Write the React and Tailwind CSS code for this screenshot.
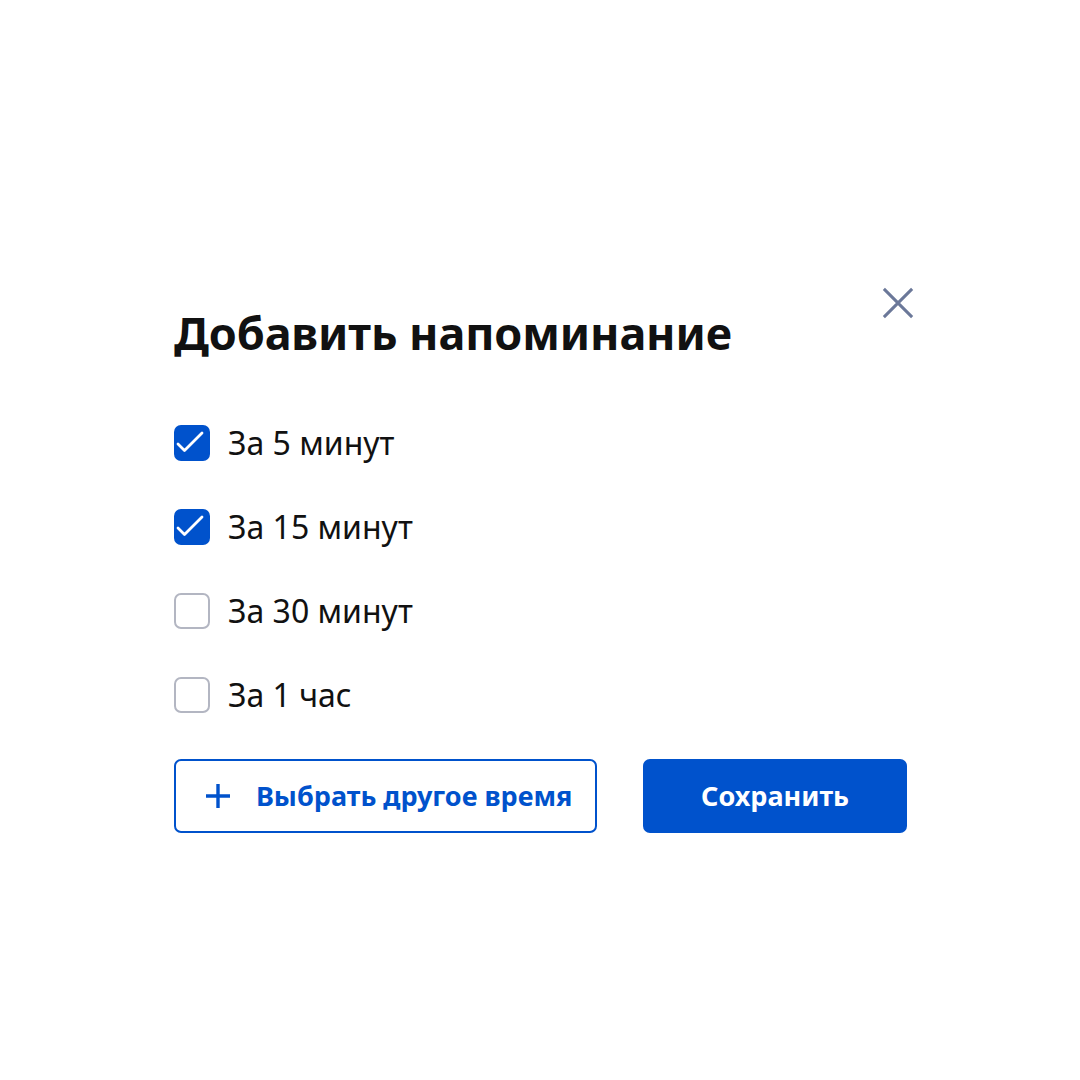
import React, { useState } from 'react';

const options = [
  { id: 5, label: 'За 5 минут', checked: true },
  { id: 15, label: 'За 15 минут', checked: true },
  { id: 30, label: 'За 30 минут', checked: false },
  { id: 60, label: 'За 1 час', checked: false },
];

function Checkbox({ checked }) {
  if (checked) {
    return (
      <span className="w-9 h-9 rounded-[7px] bg-[#0052cc] flex items-center justify-center shrink-0">
        <svg width="36" height="36" viewBox="0 0 36 36" fill="none">
          <path d="M4 19l6.5 6.5L28 8" stroke="white" strokeWidth="2.8" strokeLinecap="round" strokeLinejoin="round" />
        </svg>
      </span>
    );
  }
  return <span className="w-9 h-9 rounded-[7px] border-2 border-[#b3b6c2] bg-white shrink-0" />;
}

export default function App() {
  const [items, setItems] = useState(options);

  const toggle = (id) =>
    setItems((prev) => prev.map((o) => (o.id === id ? { ...o, checked: !o.checked } : o)));

  return (
    <div className="w-[1080px] h-[1080px] bg-white flex justify-center pt-[283px] font-['Noto_Sans',sans-serif]">
      <div className="w-[740px] flex flex-col pl-[4px] pt-[6px]">
        {/* Header */}
        <div className="flex justify-between items-start">
          <h1 className="mt-[18px] text-[45px] leading-[52px] font-bold text-[#111111] tracking-[-0.1px]">
            Добавить напоминание
          </h1>
          <button className="w-8 h-8 -mt-[2px] flex items-center justify-center -mr-[4px]">
            <svg width="34" height="34" viewBox="0 0 34 34" fill="none">
              <path d="M2 2l30 30M32 2L2 32" stroke="#6b7899" strokeWidth="3.2" />
            </svg>
          </button>
        </div>

        {/* Options */}
        <div className="mt-[66px] flex flex-col gap-[48px]">
          {items.map((o) => (
            <label key={o.id} className="flex items-center gap-[18px] cursor-pointer" onClick={() => toggle(o.id)}>
              <Checkbox checked={o.checked} />
              <span className="text-[32px] leading-9 text-[#111111]">{o.label}</span>
            </label>
          ))}
        </div>

        {/* Actions */}
        <div className="mt-[46px] flex gap-[46px]">
          <button className="w-[423px] h-[74px] rounded-[7px] border-2 border-[#0052cc] flex items-center pl-[28px] gap-[24px] text-[#0052cc]">
            <svg width="28" height="28" viewBox="0 0 28 28" fill="none">
              <path d="M14 2v24M2 14h24" stroke="#0052cc" strokeWidth="3.4" />
            </svg>
            <span className="text-[27px] font-bold">Выбрать другое время</span>
          </button>
          <button className="w-[264px] h-[74px] rounded-[7px] bg-[#0052cc] text-white text-[27px] font-bold">
            Сохранить
          </button>
        </div>
      </div>
    </div>
  );
}
